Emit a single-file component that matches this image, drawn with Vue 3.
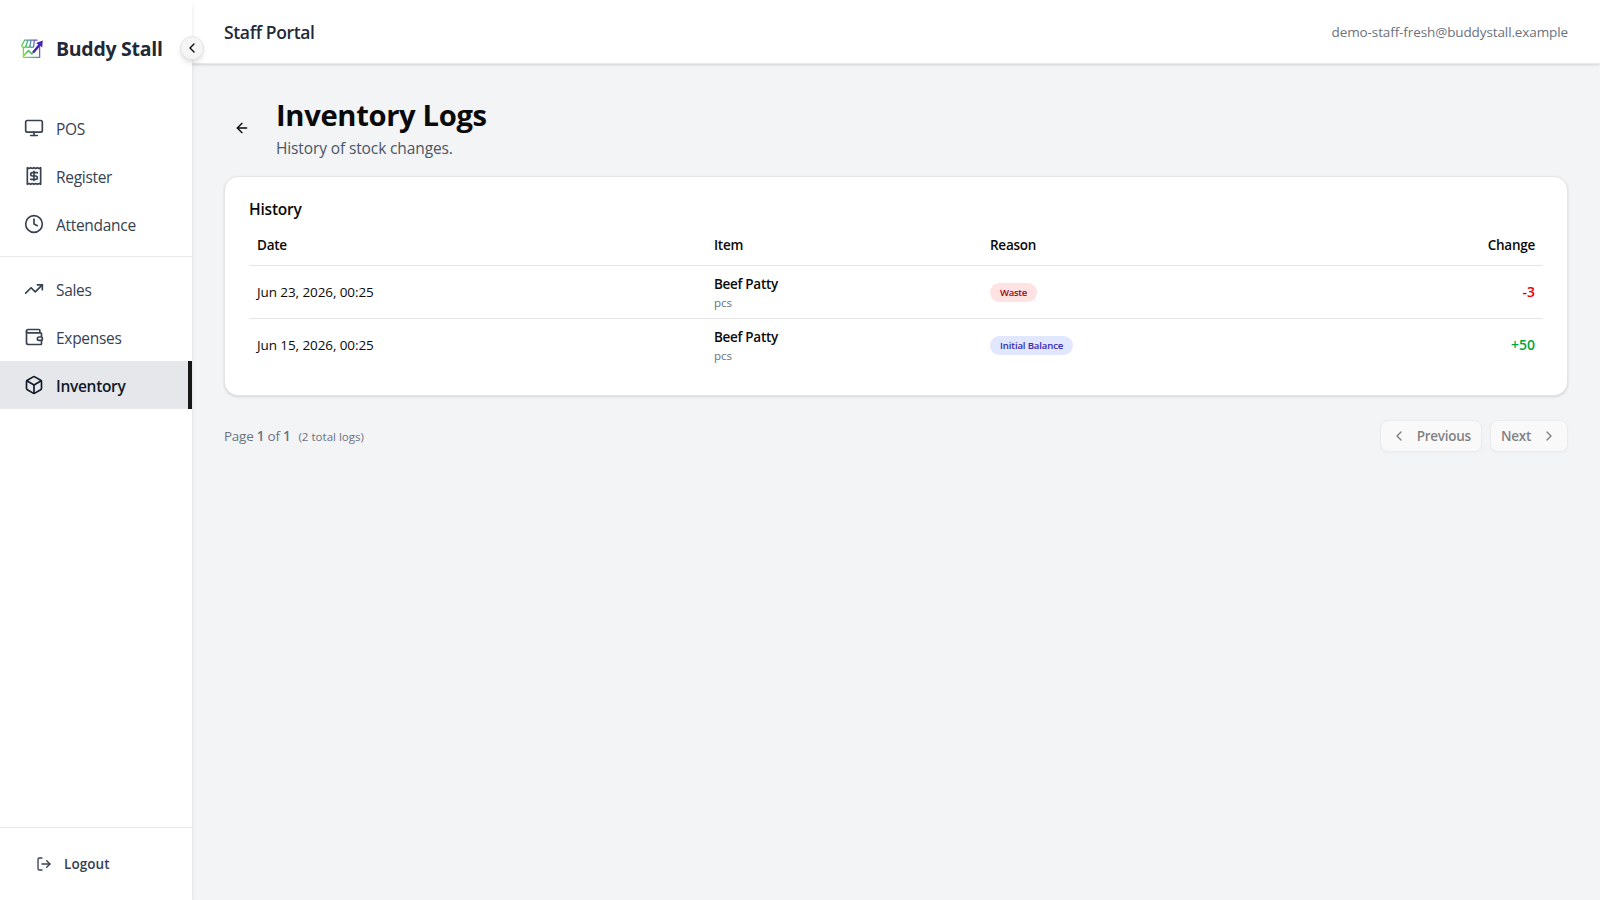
<template>
  <div class="layout">
    <aside class="sidebar">
      <div class="brand">
        <svg class="logo" viewBox="0 0 24 24" fill="none">
          <defs>
            <linearGradient id="logoGradient" x1="2" y1="18" x2="22" y2="8" gradientUnits="userSpaceOnUse">
              <stop offset="0" stop-color="#8fe32a" />
              <stop offset="0.35" stop-color="#4fc46a" />
              <stop offset="0.65" stop-color="#5b7fb8" />
              <stop offset="1" stop-color="#6a35c4" />
            </linearGradient>
          </defs>
          <g stroke="url(#logoGradient)" stroke-width="1.3" stroke-linejoin="round" stroke-linecap="round">
            <path d="M4.6 3.2H17M4.6 3.2L1.8 8.4c0 2.6 3.6 2.8 4.2.4.4 2.2 3.6 2.2 4 0 .4 2.2 3.4 2.2 3.8 0" />
            <path d="M7.8 3.4L6 8.8M11 3.4L10 8.8M14.2 3.4L13.8 8.8" />
            <path d="M3.4 11v9.4h16.2V10" />
            <path d="M3.6 18.6l5-5 3.2 3.4 6-6.8" stroke-width="1.6" />
          </g>
          <path d="M12.2 14.8l6-7.4-2.2-1.4 6.8-2.6-.6 7-1.9-1.5-6 7z" fill="#4527b0" />
        </svg>
        <span class="brand-name">Buddy Stall</span>
      </div>
      <button class="toggle" type="button" aria-label="Collapse">
        <svg class="icon icon-sm" viewBox="0 0 24 24"><path d="m15 18-6-6 6-6" /></svg>
      </button>

      <nav class="nav">
        <template v-for="(group, index) in menu" :key="index">
          <div v-if="index > 0" class="divider"></div>
          <a v-for="item in group" :key="item.label" class="nav-item" :class="{ active: item.active }">
            <svg class="icon icon-md" viewBox="0 0 24 24">
              <path v-for="d in item.paths" :key="d" :d="d" />
            </svg>
            <span>{{ item.label }}</span>
          </a>
        </template>
      </nav>

      <div class="sidebar-footer">
        <button class="logout" type="button">
          <svg class="icon icon-sm" viewBox="0 0 24 24">
            <path d="m16 17 5-5-5-5" />
            <path d="M21 12H9" />
            <path d="M9 21H5a2 2 0 0 1-2-2V5a2 2 0 0 1 2-2h4" />
          </svg>
          <span>Logout</span>
        </button>
      </div>
    </aside>

    <div class="content">
      <header class="topbar">
        <h2>Staff Portal</h2>
        <span class="email">demo-staff-fresh@buddystall.example</span>
      </header>

      <main class="main">
        <div class="page-header">
          <button class="back" type="button" aria-label="Back">
            <svg class="icon icon-sm" viewBox="0 0 24 24">
              <path d="m12 19-7-7 7-7" />
              <path d="M19 12H5" />
            </svg>
          </button>
          <div>
            <h1>Inventory Logs</h1>
            <p class="subtitle">History of stock changes.</p>
          </div>
        </div>

        <section class="card">
          <h3>History</h3>
          <table>
            <thead>
              <tr>
                <th class="col-date">Date</th>
                <th class="col-item">Item</th>
                <th>Reason</th>
                <th class="right">Change</th>
              </tr>
            </thead>
            <tbody>
              <tr v-for="log in logs" :key="log.date">
                <td class="date">{{ log.date }}</td>
                <td>
                  <div class="item-name">{{ log.item }}</div>
                  <div class="unit">{{ log.unit }}</div>
                </td>
                <td><span class="badge" :class="log.type">{{ log.reason }}</span></td>
                <td class="right change" :class="log.change > 0 ? 'positive' : 'negative'">
                  {{ log.change > 0 ? "+" + log.change : log.change }}
                </td>
              </tr>
            </tbody>
          </table>
        </section>

        <div class="pagination">
          <div class="page-info">
            Page <b>1</b> of <b>1</b><span class="total">({{ logs.length }} total logs)</span>
          </div>
          <div class="page-buttons">
            <button type="button" disabled>
              <svg class="icon icon-sm" viewBox="0 0 24 24"><path d="m15 18-6-6 6-6" /></svg>
              <span>Previous</span>
            </button>
            <button type="button" disabled>
              <span>Next</span>
              <svg class="icon icon-sm" viewBox="0 0 24 24"><path d="m9 18 6-6-6-6" /></svg>
            </button>
          </div>
        </div>
      </main>
    </div>
  </div>
</template>

<script setup>
import { ref } from "vue";

const menu = [
  [
    {
      label: "POS",
      paths: ["M4 3h16a2 2 0 0 1 2 2v10a2 2 0 0 1-2 2H4a2 2 0 0 1-2-2V5a2 2 0 0 1 2-2z", "M8 21h8", "M12 17v4"]
    },
    {
      label: "Register",
      paths: [
        "M4 2v20l2-1 2 1 2-1 2 1 2-1 2 1 2-1 2 1V2l-2 1-2-1-2 1-2-1-2 1-2-1-2 1Z",
        "M16 8h-6a2 2 0 1 0 0 4h4a2 2 0 1 1 0 4H8",
        "M12 17.5v-11"
      ]
    },
    {
      label: "Attendance",
      paths: ["M12 2a10 10 0 1 0 0 20a10 10 0 1 0 0-20", "M12 6v6l4 2"]
    }
  ],
  [
    { label: "Sales", paths: ["M16 7h6v6", "m22 7-8.5 8.5-5-5L2 17"] },
    {
      label: "Expenses",
      paths: [
        "M19 7V4a1 1 0 0 0-1-1H5a2 2 0 0 0 0 4h15a1 1 0 0 1 1 1v4h-3a2 2 0 0 0 0 4h3a1 1 0 0 0 1-1v-2a1 1 0 0 0-1-1",
        "M3 5v14a2 2 0 0 0 2 2h15a1 1 0 0 0 1-1v-4"
      ]
    },
    {
      label: "Inventory",
      active: true,
      paths: [
        "M21 8a2 2 0 0 0-1-1.73l-7-4a2 2 0 0 0-2 0l-7 4A2 2 0 0 0 3 8v8a2 2 0 0 0 1 1.73l7 4a2 2 0 0 0 2 0l7-4A2 2 0 0 0 21 16Z",
        "m3.3 7 8.7 5 8.7-5",
        "M12 22V12"
      ]
    }
  ]
];

const logs = ref([
  { date: "Jun 23, 2026, 00:25", item: "Beef Patty", unit: "pcs", reason: "Waste", type: "waste", change: -3 },
  { date: "Jun 15, 2026, 00:25", item: "Beef Patty", unit: "pcs", reason: "Initial Balance", type: "initial", change: 50 }
]);
</script>

<style>
body {
  margin: 0;
}
</style>

<style scoped>
* {
  box-sizing: border-box;
}
.layout {
  display: flex;
  height: 100vh;
  background-color: #f3f4f6;
  color: #0a0a0a;
  font-family: "Segoe UI", "Open Sans", "Noto Sans", sans-serif;
}
h1, h2, h3, p {
  margin: 0;
}
button {
  font-family: inherit;
  color: inherit;
  border: none;
  background: none;
  padding: 0;
}
.icon {
  flex: none;
  fill: none;
  stroke: currentColor;
  stroke-width: 2;
  stroke-linecap: round;
  stroke-linejoin: round;
}
.icon-sm {
  width: 16px;
  height: 16px;
}
.icon-md {
  width: 20px;
  height: 20px;
}

/* Sidebar */
.sidebar {
  position: relative;
  z-index: 2;
  display: flex;
  flex-direction: column;
  flex: none;
  width: 192px;
  background-color: #fff;
  box-shadow: 0 4px 6px -1px rgba(0, 0, 0, 0.1), 0 2px 4px -2px rgba(0, 0, 0, 0.1);
}
.brand {
  display: flex;
  align-items: center;
  gap: 12px;
  height: 97px;
  padding-left: 20px;
}
.logo {
  width: 24px;
  height: 24px;
}
.brand-name {
  padding-top: 1px;
  font-size: 19.5px;
  line-height: 28px;
  font-weight: 700;
  letter-spacing: -0.28px;
  color: #1f2937;
}
.toggle {
  position: absolute;
  top: 36px;
  right: -12px;
  display: flex;
  align-items: center;
  justify-content: center;
  width: 24px;
  height: 24px;
  border: 1px solid #e5e5e5;
  border-radius: 50%;
  background-color: #f5f5f5;
  box-shadow: 0 4px 6px -1px rgba(0, 0, 0, 0.1), 0 2px 4px -2px rgba(0, 0, 0, 0.1);
}
.nav {
  flex: 1;
  padding-top: 7px;
}
.nav-item {
  display: flex;
  align-items: center;
  gap: 12px;
  height: 48px;
  padding-left: 24px;
  font-size: 15.5px;
  letter-spacing: -0.3px;
  color: #374151;
}
.nav-item span {
  padding-top: 1px;
}
.nav-item.active {
  background-color: #e5e7eb;
  border-right: 4px solid #171717;
  color: #111827;
  font-weight: 600;
}
.divider {
  height: 1px;
  margin: 8px 0;
  background-color: #e5e7eb;
}
.sidebar-footer {
  padding: 16px;
  border-top: 1px solid #e5e5e5;
}
.logout {
  display: flex;
  align-items: center;
  gap: 12px;
  height: 40px;
  padding-left: 20px;
  font-size: 13.5px;
  font-weight: 600;
  letter-spacing: 0.08px;
  color: #374151;
}

/* Content */
.content {
  flex: 1;
  min-width: 0;
}
.topbar {
  position: relative;
  display: flex;
  align-items: center;
  justify-content: space-between;
  height: 64px;
  padding: 0 32px;
  background-color: #fff;
  border-bottom: 1px solid #e5e7eb;
  box-shadow: 0 1px 3px rgba(0, 0, 0, 0.1), 0 1px 2px -1px rgba(0, 0, 0, 0.1);
}
.topbar h2 {
  font-size: 17.5px;
  font-weight: 600;
  letter-spacing: -0.35px;
  color: #1f2937;
}
.email {
  font-size: 13.5px;
  letter-spacing: -0.11px;
  color: #6b7280;
}
.main {
  padding: 32px;
}
.page-header {
  display: flex;
  align-items: center;
  gap: 16px;
  margin-bottom: 16px;
}
.back {
  display: flex;
  align-items: center;
  justify-content: center;
  width: 36px;
  height: 36px;
}
h1 {
  padding: 1px 0 3px;
  font-size: 29.2px;
  line-height: 36px;
  font-weight: 700;
  letter-spacing: -0.35px;
}
.subtitle {
  font-size: 15.5px;
  line-height: 24px;
  letter-spacing: -0.12px;
  color: #4b5563;
}
.card {
  padding: 24px;
  border: 1px solid #e5e5e5;
  border-radius: 14px;
  background-color: #fff;
  box-shadow: 0 1px 3px rgba(0, 0, 0, 0.1), 0 1px 2px -1px rgba(0, 0, 0, 0.1);
}
.card h3 {
  margin-bottom: 8px;
  font-size: 15.5px;
  line-height: 16px;
  font-weight: 600;
  letter-spacing: -0.2px;
}

/* Table */
table {
  width: 100%;
  border-collapse: separate;
  border-spacing: 0;
  table-layout: fixed;
  font-size: 13.5px;
  line-height: 20px;
}
th {
  height: 41px;
  padding: 0 8px;
  border-bottom: 1px solid #e5e5e5;
  text-align: left;
  font-weight: 600;
  letter-spacing: -0.25px;
}
td {
  padding: 8px;
  vertical-align: middle;
}
tbody tr:not(:last-child) td {
  border-bottom: 1px solid #e5e5e5;
}
.col-date {
  width: 457px;
}
.col-item {
  width: 276px;
}
.right {
  text-align: right;
}
.date {
  letter-spacing: -0.09px;
}
.item-name {
  font-weight: 600;
  letter-spacing: -0.3px;
}
.unit {
  padding-top: 1px;
  font-size: 11.6px;
  line-height: 15px;
  letter-spacing: -0.1px;
  color: #6b7280;
}
.badge {
  display: inline-block;
  padding: 2px 10px;
  border-radius: 10px;
  font-size: 9.6px;
  line-height: 15px;
  font-weight: 600;
  letter-spacing: -0.15px;
  vertical-align: middle;
}
.badge.waste {
  background-color: #ffe2e2;
  color: #9f0712;
  letter-spacing: -0.35px;
}
.badge.initial {
  background-color: #e0e7ff;
  color: #372aac;
}
.change {
  font-size: 14px;
  font-weight: 600;
}
.positive {
  color: #00a63e;
}
.negative {
  color: #e7000b;
}

/* Pagination */
.pagination {
  display: flex;
  align-items: center;
  justify-content: space-between;
  margin-top: 24px;
}
.page-info {
  font-size: 13.5px;
  letter-spacing: -0.25px;
  color: #6b7280;
}
.page-info b {
  font-weight: 600;
}
.total {
  margin-left: 8px;
  font-size: 11.6px;
  letter-spacing: -0.02px;
}
.page-buttons {
  display: flex;
  gap: 8px;
}
.page-buttons button {
  display: flex;
  align-items: center;
  gap: 10px;
  height: 32px;
  padding: 0 10px;
  border: 1px solid #e5e5e5;
  border-radius: 8px;
  background-color: #fff;
  box-shadow: 0 1px 2px rgba(0, 0, 0, 0.05);
  font-size: 13.5px;
  font-weight: 600;
  letter-spacing: -0.26px;
  opacity: 0.5;
}
</style>
